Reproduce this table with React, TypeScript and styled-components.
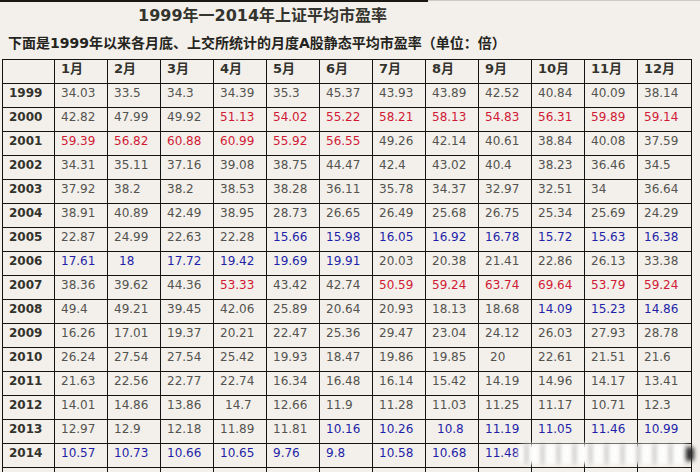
import React from "react";
import styled, { createGlobalStyle } from "styled-components";

const GlobalStyle = createGlobalStyle`
  body {
    margin: 0;
    background: #f3f0eb;
    overflow: hidden;
    font-family: "DejaVu Sans", "Noto Sans CJK SC", sans-serif;
  }
`;

const Page = styled.div`
  width: 700px;
  height: 472px;
  overflow: hidden;
`;

const TopBar = styled.div`
  display: flex;
  height: 2px;
`;

const DarkSeg = styled.div`
  width: 428px;
  background: #1b1714;
`;

const LightSeg = styled.div`
  flex: 1;
  border-top: 1px solid #cdc9c3;
`;

const Title = styled.div`
  height: 28px;
  line-height: 28px;
  padding-left: 138px;
  font-size: 16px;
  font-weight: bold;
  color: #34342e;
`;

const Subtitle = styled.div`
  height: 26px;
  line-height: 26px;
  padding-left: 8px;
  font-size: 14px;
  font-weight: bold;
  color: #262420;
`;

const TableWrap = styled.div`
  position: relative;
  margin: 3px 0 0 2px;
`;

const Grid = styled.table`
  border-collapse: collapse;
  table-layout: fixed;
  width: 689px;
`;

const Cell = styled.td<{ $tone?: string; $indent?: number; $head?: boolean }>`
  height: 24px;
  padding: 2px 0 0 ${(p) => 6 + (p.$indent ?? 0)}px;
  box-sizing: border-box;
  vertical-align: top;
  border: 1.5px solid #141414;
  font-size: 12px;
  line-height: 15px;
  white-space: nowrap;
  font-weight: ${(p) => (p.$head ? "bold" : "normal")};
  color: ${(p) =>
    p.$head
      ? "#33332d"
      : p.$tone === "r"
      ? "#d01a35"
      : p.$tone === "b"
      ? "#1f1fa8"
      : "#53534f"};
`;

const MonthCell = styled(Cell)`
  font-size: 13px;
  padding-top: 1px;
`;

const Watermark = styled.div`
  position: absolute;
  left: 516px;
  top: 385px;
  width: 174px;
  height: 20px;
  border-radius: 8px;
  filter: blur(2px);
  background: repeating-linear-gradient(
      90deg,
      rgba(255, 255, 255, 0.9) 0 7px,
      rgba(170, 168, 165, 0.7) 7px 10px,
      rgba(255, 255, 255, 0.9) 10px 16px
    ),
    #eeece9;
`;

const Mark = styled.div`
  position: absolute;
  right: -2px;
  top: 3px;
  width: 8px;
  height: 14px;
  background: #2a2a2a;
  border-radius: 3px;
`;

const months = ["1月", "2月", "3月", "4月", "5月", "6月", "7月", "8月", "9月", "10月", "11月", "12月"];

const rows: [string, string, string][] = [
  ["1999", "34.03 33.5 34.3 34.39 35.3 45.37 43.93 43.89 42.52 40.84 40.09 38.14", "gggggggggggg"],
  ["2000", "42.82 47.99 49.92 51.13 54.02 55.22 58.21 58.13 54.83 56.31 59.89 59.14", "gggrrrrrrrrr"],
  ["2001", "59.39 56.82 60.88 60.99 55.92 56.55 49.26 42.14 40.61 38.84 40.08 37.59", "rrrrrrgggggg"],
  ["2002", "34.31 35.11 37.16 39.08 38.75 44.47 42.4 43.02 40.4 38.23 36.46 34.5", "gggggggggggg"],
  ["2003", "37.92 38.2 38.2 38.53 38.28 36.11 35.78 34.37 32.97 32.51 34 36.64", "gggggggggggg"],
  ["2004", "38.91 40.89 42.49 38.95 28.73 26.65 26.49 25.68 26.75 25.34 25.69 24.29", "gggggggggggg"],
  ["2005", "22.87 24.99 22.63 22.28 15.66 15.98 16.05 16.92 16.78 15.72 15.63 16.38", "ggggbbbbbbbb"],
  ["2006", "17.61 _18 17.72 19.42 19.69 19.91 20.03 20.38 21.41 22.86 26.13 33.38", "bbbbbbgggggg"],
  ["2007", "38.36 39.62 44.36 53.33 43.42 42.74 50.59 59.24 63.74 69.64 53.79 59.24", "gggrggrrrrrr"],
  ["2008", "49.4 49.21 39.45 42.06 25.89 20.64 20.93 18.13 18.68 14.09 15.23 14.86", "gggggggggbbb"],
  ["2009", "16.26 17.01 19.37 20.21 22.47 25.36 29.47 23.04 24.12 26.03 27.93 28.78", "gggggggggggg"],
  ["2010", "26.24 27.54 27.54 25.42 19.93 18.47 19.86 19.85 _20 22.61 21.51 21.6", "gggggggggggg"],
  ["2011", "21.63 22.56 22.77 22.74 16.34 16.48 16.14 15.42 14.19 14.96 14.17 13.41", "gggggggggggg"],
  ["2012", "14.01 14.86 13.86 _14.7 12.66 11.9 11.28 11.03 11.25 11.17 10.71 12.3", "gggggggggggg"],
  ["2013", "12.97 12.9 12.18 11.89 11.81 10.16 10.26 _10.8 11.19 11.05 11.46 10.99", "gggggbbbbbbb"],
  ["2014", "10.57 10.73 10.66 10.65 9.76 9.8 10.58 10.68 11.48 - - -", "bbbbbbbbbbbb"],
  ["", "- - - - - - - - - - - -", "gggggggggggg"],
];

export default function App() {
  return (
    <Page>
      <GlobalStyle />
      <TopBar>
        <DarkSeg />
        <LightSeg />
      </TopBar>
      <Title>1999年一2014年上证平均市盈率</Title>
      <Subtitle>下面是1999年以来各月底、上交所统计的月度A股静态平均市盈率（单位：倍）</Subtitle>
      <TableWrap>
        <Grid>
          <colgroup>
            <col style={{ width: 52 }} />
            {months.map((m, i) => (
              <col key={m} style={{ width: i === 11 ? 54 : 53 }} />
            ))}
          </colgroup>
          <tbody>
            <tr>
              <MonthCell $head />
              {months.map((m) => (
                <MonthCell key={m} $head>
                  {m}
                </MonthCell>
              ))}
            </tr>
            {rows.map(([year, values, tones], r) => (
              <tr key={r}>
                <Cell $head>{year}</Cell>
                {values.split(" ").map((v, i) => {
                  const indent = v.startsWith("_");
                  return (
                    <Cell key={i} $tone={tones[i]} $indent={indent ? 5 : 0}>
                      {v === "-" ? "" : v.replace("_", "")}
                    </Cell>
                  );
                })}
              </tr>
            ))}
          </tbody>
        </Grid>
        <Watermark>
          <Mark />
        </Watermark>
      </TableWrap>
    </Page>
  );
}
